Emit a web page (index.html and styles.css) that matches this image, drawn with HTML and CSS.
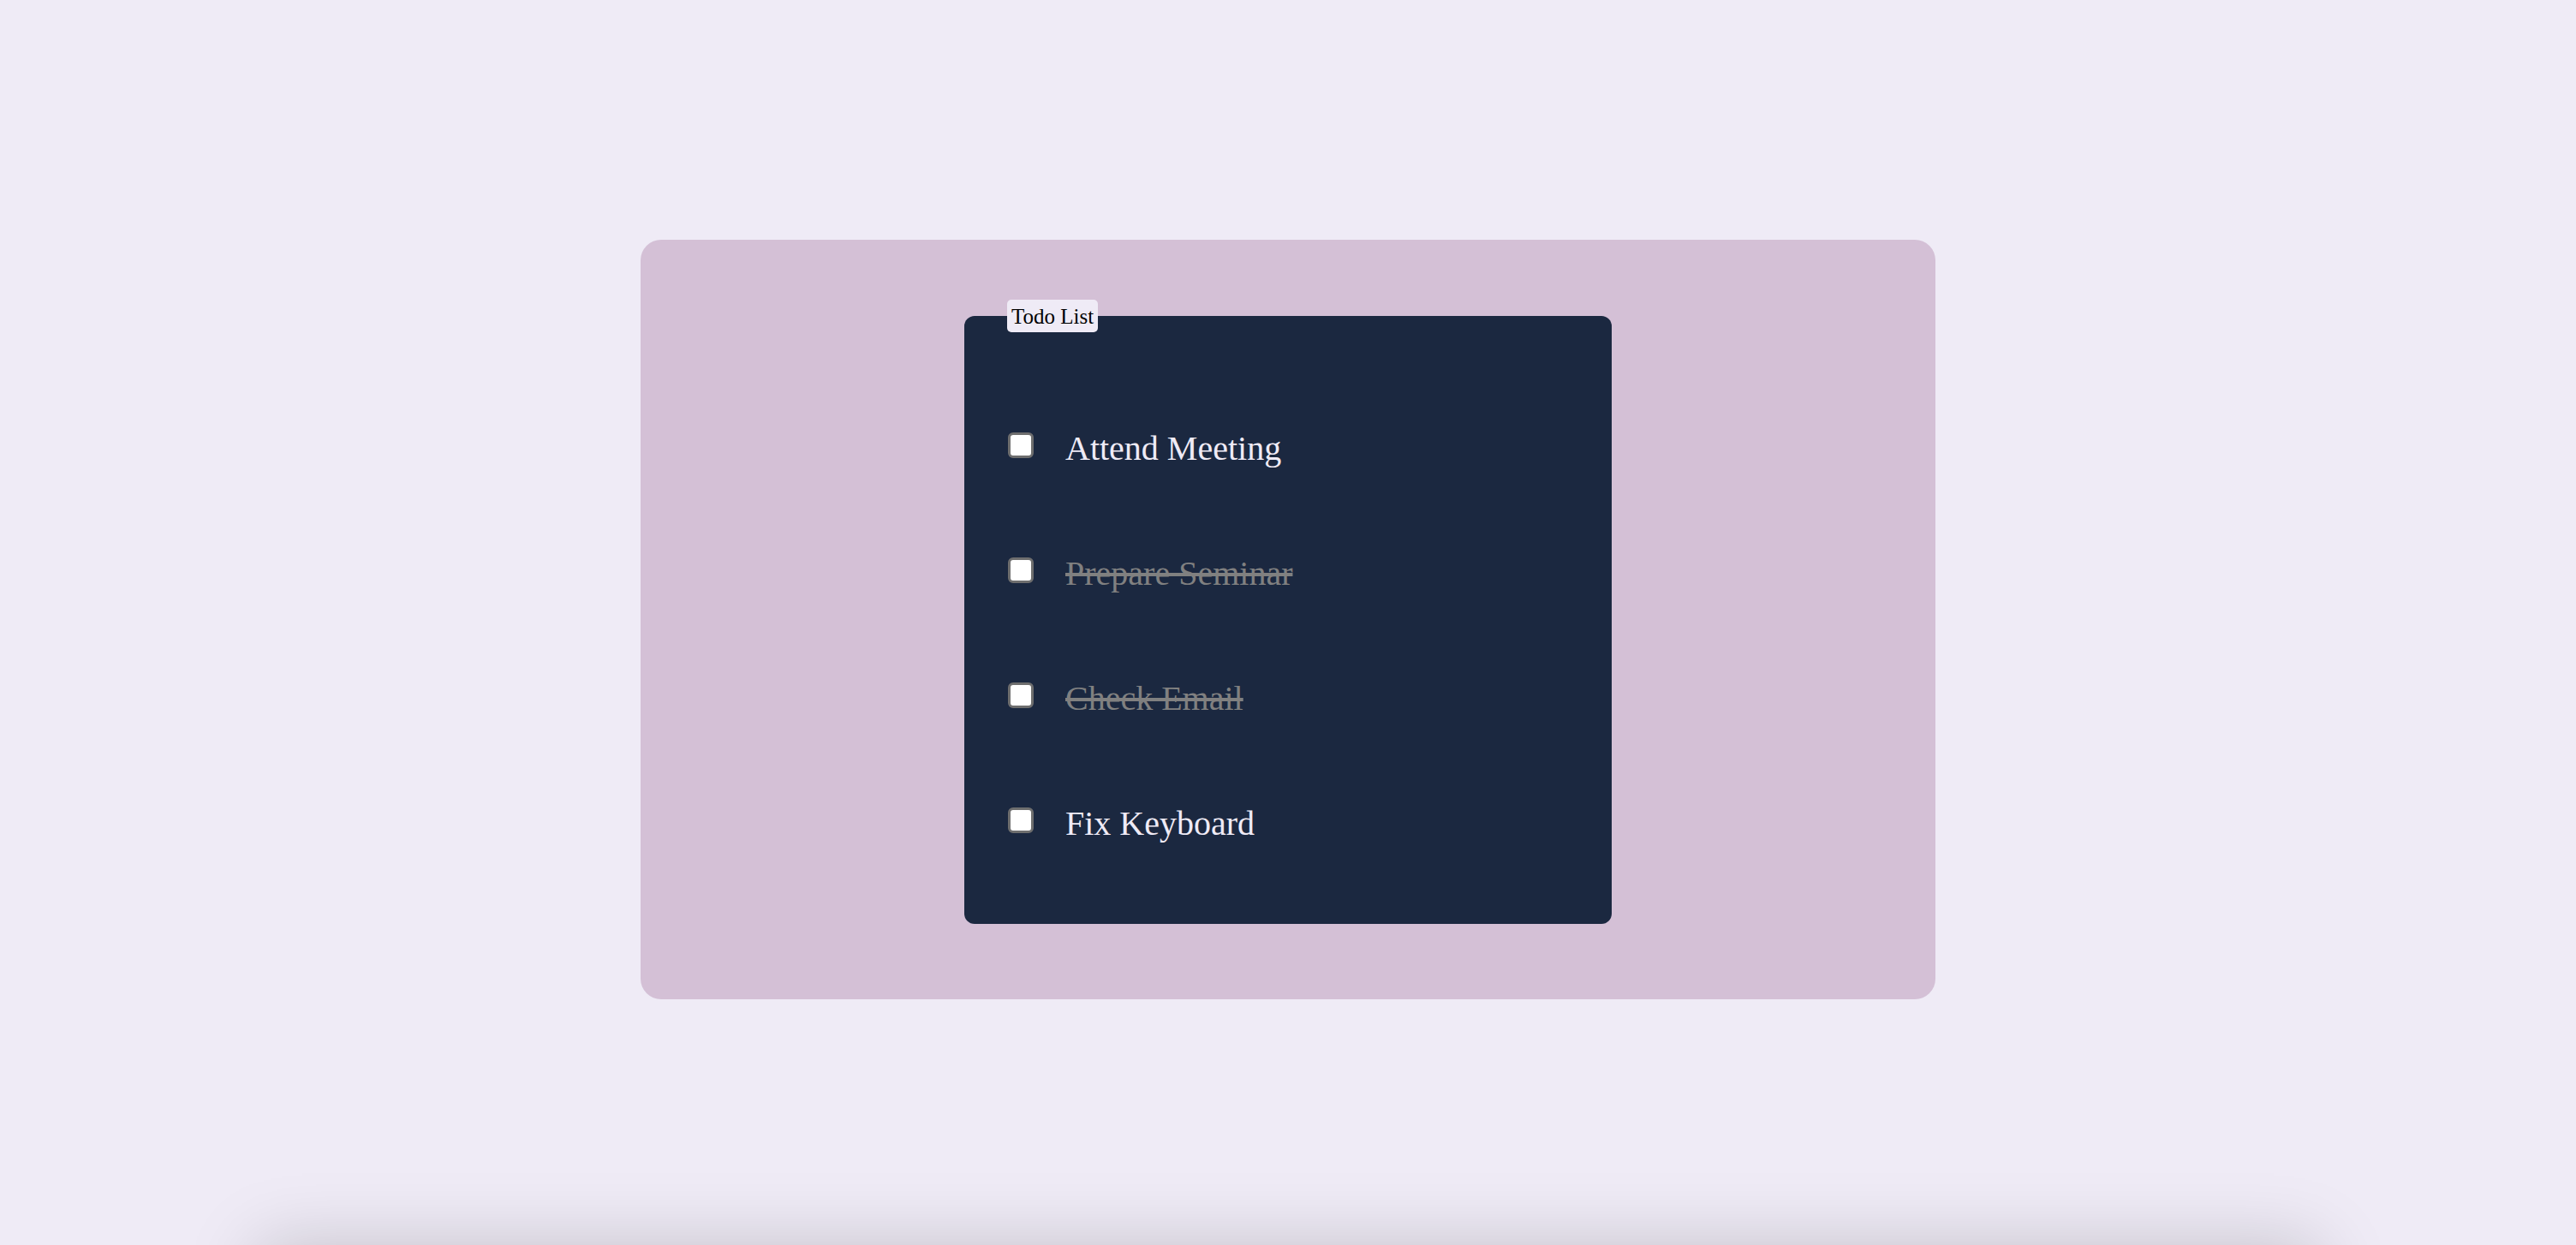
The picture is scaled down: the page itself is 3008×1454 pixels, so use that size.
FILE: index.html
```html
<!DOCTYPE html>
<html lang="en">
<head>
<meta charset="utf-8">
<title>Todo List</title>
<link rel="stylesheet" href="styles.css">
</head>
<body>
<main class="page">
  <section class="card">
    <fieldset class="todo">
      <legend class="todo-title">Todo List</legend>
      <ul class="todo-list">
        <li class="todo-item"><input type="checkbox" class="todo-check"><span class="todo-text">Attend Meeting</span></li>
        <li class="todo-item done"><input type="checkbox" class="todo-check"><span class="todo-text">Prepare Seminar</span></li>
        <li class="todo-item done"><input type="checkbox" class="todo-check"><span class="todo-text">Check Email</span></li>
        <li class="todo-item"><input type="checkbox" class="todo-check"><span class="todo-text">Fix Keyboard</span></li>
      </ul>
    </fieldset>
  </section>
</main>
<footer class="below"></footer>
</body>
</html>
```

FILE: styles.css
```css
html, body {
  margin: 0;
  padding: 0;
}
body {
  background: #efebf6;
  font-family: "Liberation Serif", "Times New Roman", serif;
  overflow: hidden;
}
.page {
  height: 1454px;
  display: flex;
  align-items: flex-start;
  justify-content: center;
  padding-top: 280px;
  box-sizing: border-box;
}
.card {
  width: 1512px;
  height: 887px;
  box-sizing: border-box;
  background: #d4c0d6;
  border-radius: 24px;
  padding-top: 70px;
  display: flex;
  justify-content: center;
  align-items: flex-start;
}
.todo {
  width: 756px;
  height: 729px;
  box-sizing: border-box;
  margin: 0;
  border: none;
  border-radius: 12px;
  background: #1b2840;
  padding: 0 50px 0 50px;
}
.todo-title {
  background: #efebf6;
  color: #000;
  font-size: 25px;
  line-height: 30px;
  padding: 5px 5px 3px;
  border-radius: 5px;
}
.todo-list {
  list-style: none;
  margin: 59px 0 0 0;
  padding: 0;
}
.todo-item {
  height: 146px;
  display: flex;
  align-items: center;
}
.todo-check {
  appearance: none;
  -webkit-appearance: none;
  width: 30px;
  height: 30px;
  box-sizing: border-box;
  margin: 0 0 0 1px;
  background: #ffffff;
  border: 3px solid #6e6e6e;
  border-radius: 6px;
  flex: none;
}
.todo-text {
  margin-left: 37px;
  padding-top: 8px;
  font-size: 40px;
  line-height: 48px;
  color: #efebf6;
}
.done .todo-text {
  color: #808080;
  text-decoration: line-through;
}
.below {
  width: 80%;
  height: 400px;
  margin: 0 auto;
  box-shadow: 0 0 80px rgba(0, 0, 0, 0.18);
}
```
